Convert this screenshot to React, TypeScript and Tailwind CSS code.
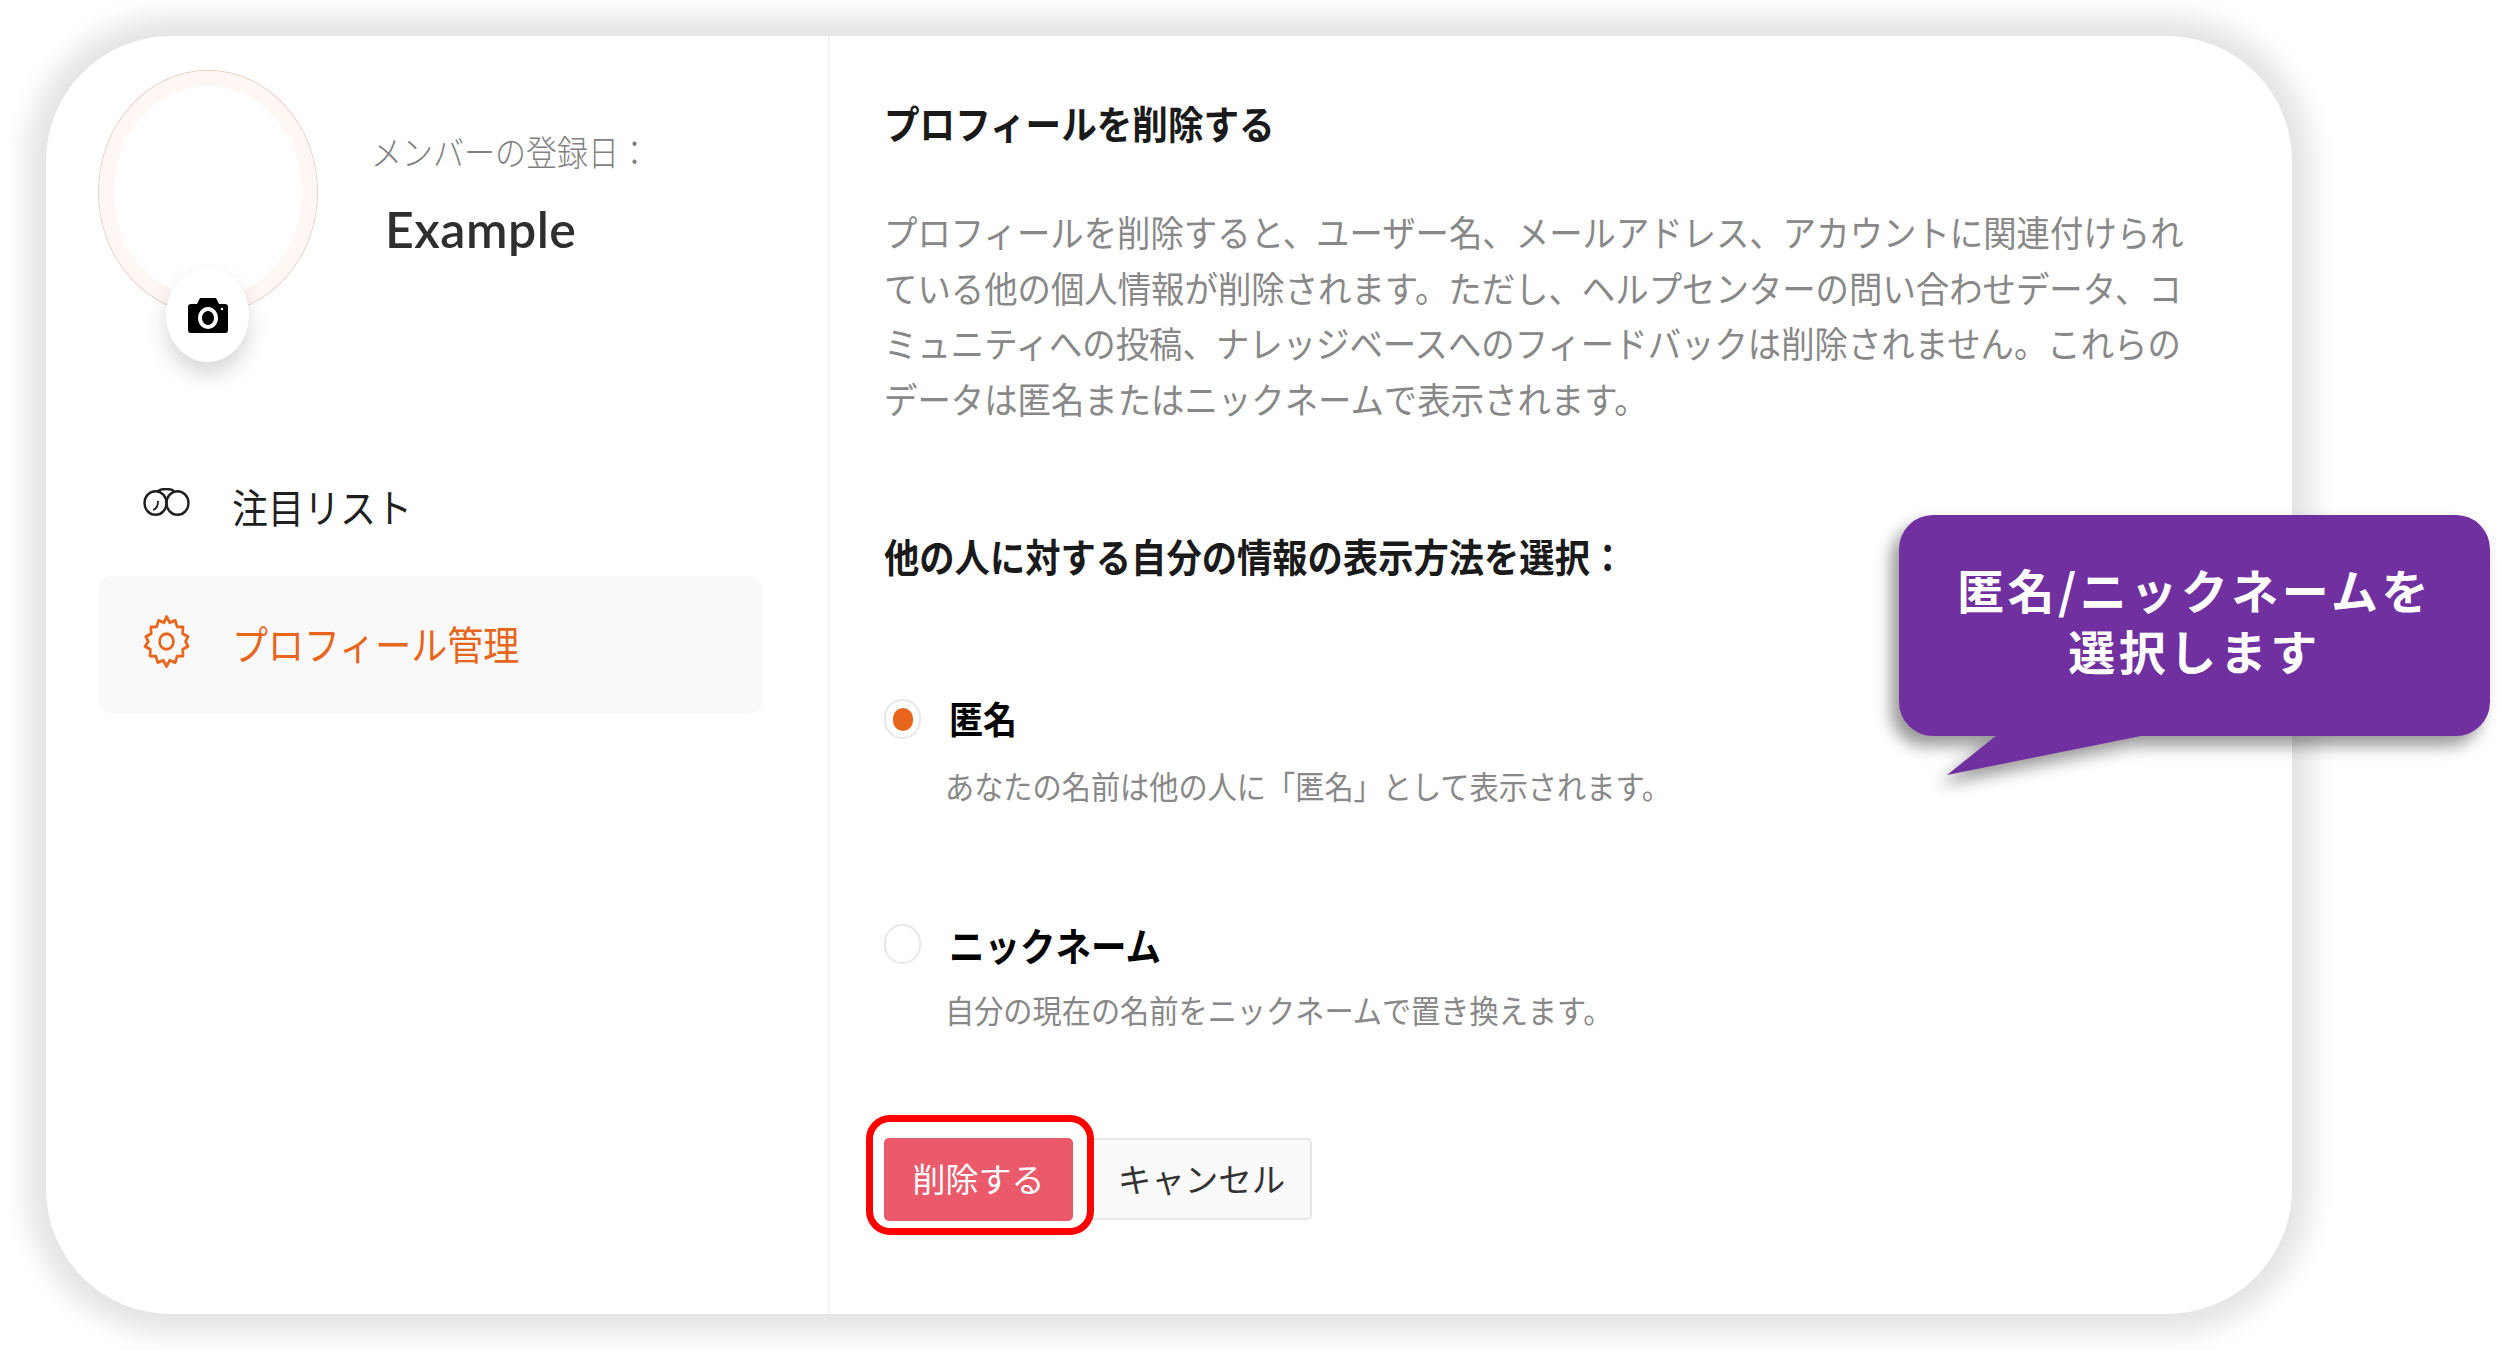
const jp = "font-['Noto_Sans_CJK_JP','Noto_Sans',sans-serif]";

// binoculars icon, drawn because the packages have none this shape
function Binoculars() {
  return (
    <svg viewBox="0 0 47 28" className="w-[47px] h-[28px] -mt-[12px]" fill="none" stroke="#1f1f1f" strokeWidth="2.4">
      <ellipse cx="12.5" cy="15" rx="11" ry="11.8" />
      <ellipse cx="34.5" cy="15" rx="11" ry="11.8" />
      <path d="M15 4 C16 0 30 0 31 4" />
      <path d="M15 13 C15 18 13 21 10 22" strokeWidth="1.8" />
    </svg>
  );
}

function Gear() {
  return (
    <svg viewBox="0.5 0.5 23 23" className="w-[47px] h-[53px] -mt-[8px] shrink-0" fill="none" stroke="#e8651c" strokeWidth="1.3" strokeLinejoin="round" preserveAspectRatio="none">
      <path d="M12 1.2l1.6 2.6 2.7-.9.9 2.7 2.9.1-.2 2.9 2.6 1.3-1.2 2.1 1.2 2.1-2.6 1.3.2 2.9-2.9.1-.9 2.7-2.7-.9L12 22.8l-1.6-2.6-2.7.9-.9-2.7-2.9-.1.2-2.9-2.6-1.3L3.1 12 1.9 9.9l2.6-1.3-.2-2.9 2.9-.1.9-2.7 2.7.9z" />
      <circle cx="12" cy="12" r="3.4" />
    </svg>
  );
}

function Camera() {
  return (
    <svg viewBox="0 0 40 35" className="w-[40px] h-[35px]">
      <path fillRule="evenodd" d="M12 0h16l3 6h6a3 3 0 0 1 3 3v23a3 3 0 0 1-3 3H3a3 3 0 0 1-3-3V9a3 3 0 0 1 3-3h6zM20 9a10 11 0 1 0 .01 0zM20 13a6 7 0 1 1-.01 0z" fill="#000" />
      <circle cx="34" cy="11" r="1.2" fill="#fff" />
    </svg>
  );
}

function Radio({ checked }: { checked?: boolean }) {
  return (
    <span className="w-[37px] h-[40px] rounded-full border-2 border-[#e8e8e8] bg-white flex items-center justify-center shrink-0">
      {checked && <span className="w-[20px] h-[23px] rounded-full bg-[#e8651c]" />}
    </span>
  );
}

export default function App() {
  return (
    <div className={`relative w-[2500px] h-[1350px] bg-white overflow-hidden pt-[36px] pl-[46px] ${jp}`}>
      {/* Card */}
      <div className="w-[2246px] h-[1278px] bg-white rounded-[125px] shadow-[0_0_26px_20px_rgba(0,0,0,0.105)] flex">
        {/* Sidebar */}
        <aside className="w-[784px] h-full border-r-2 border-[#f2f2f2] pl-[52px] pr-[65px] pt-[34px] shrink-0">
          <div className="flex h-[292px]">
            <div className="relative w-[220px] h-[244px] rounded-[50%] border border-[#eccdbd] bg-white shrink-0">
              <div className="w-full h-full rounded-[50%] border-[15px] border-[#fff7f3]" />
              <button className="absolute left-[67px] top-[197px] w-[83px] h-[94px] rounded-[50%] bg-white shadow-[0_12px_22px_rgba(0,0,0,0.16)] flex items-center justify-center">
                <Camera />
              </button>
            </div>
            <div className="ml-[53px] pt-[61px]">
              <p className="text-[31px] leading-[40px] text-[#808080] font-light scale-y-[1.12] origin-center whitespace-nowrap">メンバーの登録日：</p>
              <p className="mt-[28px] ml-[14px] text-[50px] leading-[60px] tracking-[0.5px] text-[#2f2f2f] font-semibold font-['Lato',sans-serif]">Example</p>
            </div>
          </div>
          <nav className="mt-[78px]">
            <div className="flex items-center h-[136px] pl-[45px]">
              <Binoculars />
              <span className="ml-[42px] -mt-[6px] text-[36px] text-[#1f1f1f] scale-y-[1.1]">注目リスト</span>
            </div>
            <div className="flex items-center h-[138px] pl-[45px] rounded-[15px] bg-[#f9f9f9]">
              <Gear />
              <span className="ml-[42px] -mt-[6px] text-[36px] text-[#e8651c] scale-y-[1.1]">プロフィール管理</span>
            </div>
          </nav>
        </aside>

        {/* Content */}
        <main className="flex-1 pl-[54px] pt-[61px]">
          <h1 className="text-[35.6px] leading-[50px] font-bold text-[#1a1a1a] scale-y-[1.1] origin-left">プロフィールを削除する</h1>
          <p className="mt-[65px] w-[1312px] text-[33.4px] leading-[51.6px] text-[#888888] scale-y-[1.08] origin-center">
            プロフィールを削除すると、ユーザー名、メールアドレス、アカウントに関連付けられている他の個人情報が削除されます。ただし、ヘルプセンターの問い合わせデータ、コミュニティへの投稿、ナレッジベースへのフィードバックは削除されません。これらのデータは匿名またはニックネームで表示されます。
          </p>
          <h2 className="mt-[112px] text-[35.3px] leading-[50px] font-bold text-[#1a1a1a] scale-y-[1.1] origin-left">他の人に対する自分の情報の表示方法を選択：</h2>

          <div className="mt-[119px] flex items-center gap-[28px]">
            <Radio checked />
            <span className="text-[34px] leading-[40px] font-bold text-black scale-y-[1.1]">匿名</span>
          </div>
          <p className="mt-[25px] ml-[61px] text-[29.2px] leading-[42px] text-[#888888] scale-y-[1.08] origin-left">あなたの名前は他の人に「匿名」として表示されます。</p>

          <div className="mt-[118px] flex items-center gap-[28px]">
            <Radio />
            <span className="text-[35.5px] leading-[40px] font-bold text-black scale-y-[1.1]">ニックネーム</span>
          </div>
          <p className="mt-[24px] ml-[61px] text-[29.2px] leading-[42px] text-[#888888] scale-y-[1.08] origin-left">自分の現在の名前をニックネームで置き換えます。</p>

          <div className="relative mt-[108px] flex items-start">
            <button className="w-[189px] h-[83px] rounded-[5px] bg-[#ea5a6a] text-white text-[33px] pb-[2px]">削除する</button>
            <button className="ml-[14px] w-[225px] h-[82px] rounded-[5px] border-2 border-[#e6e8e8] bg-[#fafafa] text-[#333333] text-[33.5px] pl-[4px] pb-[2px]">キャンセル</button>
            {/* Red highlight frame */}
            <div className="absolute left-[-18px] top-[-23px] w-[228px] h-[120px] rounded-[24px] border-[7px] border-[#ff0000]" />
          </div>
        </main>
      </div>

      {/* Callout */}
      <div className="absolute left-[1899px] top-[515px] w-[591px] h-[221px] drop-shadow-[-8px_10px_8px_rgba(0,0,0,0.4)]">
        <div className="w-full h-full rounded-[34px] bg-[#70309f] flex items-center justify-center text-white text-[47px] leading-[61px] font-bold tracking-[3.5px] text-center pb-[14px]">
          <p>匿名/ニックネームを<br />選択します</p>
        </div>
        <svg viewBox="0 0 200 40" className="absolute left-[48px] top-[220px] w-[200px] h-[40px]">
          <path d="M50 0 L0 40 L199 0 Z" fill="#70309f" />
        </svg>
      </div>
    </div>
  );
}
